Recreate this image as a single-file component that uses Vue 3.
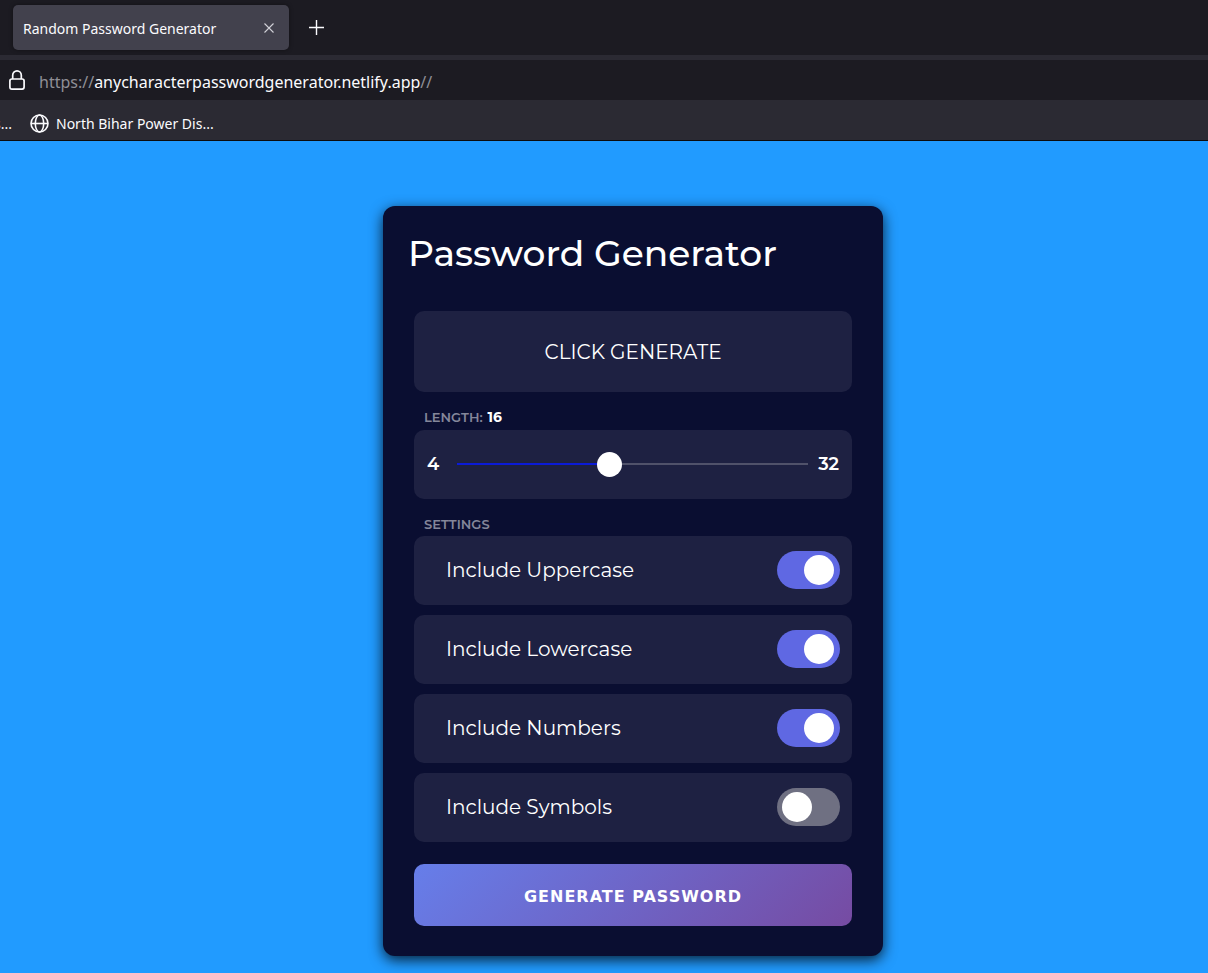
<script setup>
import { computed, reactive, ref } from 'vue'

const MIN = 4
const MAX = 32

const length = ref(16)
const password = ref('')
const settings = reactive([
  { id: 'uppercase', label: 'Include Uppercase', on: true, chars: 'ABCDEFGHIJKLMNOPQRSTUVWXYZ' },
  { id: 'lowercase', label: 'Include Lowercase', on: true, chars: 'abcdefghijklmnopqrstuvwxyz' },
  { id: 'numbers', label: 'Include Numbers', on: true, chars: '0123456789' },
  { id: 'symbols', label: 'Include Symbols', on: false, chars: '!@#$%^&*()_+-=' },
])

const fill = computed(() => ((length.value - MIN) / (MAX - MIN)) * 100 + '%')

function generate() {
  const pool = settings.filter((s) => s.on).map((s) => s.chars).join('')
  if (!pool) {
    password.value = ''
    return
  }
  let out = ''
  for (let i = 0; i < length.value; i++) {
    out += pool[Math.floor(Math.random() * pool.length)]
  }
  password.value = out
}
</script>

<template>
  <div class="window">
    <header class="chrome">
      <div class="tabs">
        <div class="tab">
          <span class="tab-title">Random Password Generator</span>
          <button class="icon-button" type="button" aria-label="Close tab">
            <svg width="10" height="10" viewBox="0 0 10 10" fill="none" stroke="#d2d1d8" stroke-width="1.1">
              <path d="M0.5 0.5 9.5 9.5M9.5 0.5 0.5 9.5" />
            </svg>
          </button>
        </div>
        <button class="icon-button" type="button" aria-label="New tab">
          <svg width="15" height="15" viewBox="0 0 15 15" fill="none" stroke="#fbfbfe" stroke-width="1.4">
            <path d="M7.5 0V15M0 7.5H15" />
          </svg>
        </button>
      </div>
      <div class="address">
        <svg width="16" height="20" viewBox="0 0 16 20" fill="none" stroke="#fbfbfe" stroke-width="1.7">
          <rect x="0.9" y="9" width="14.2" height="10.1" rx="2" />
          <path d="M3.7 9V5.2a4.3 4.3 0 0 1 8.6 0V9" />
        </svg>
        <span class="url">https://<b>anycharacterpasswordgenerator.netlify.app</b>//</span>
      </div>
      <nav class="bookmarks">
        <a class="clipped" href="#">s...</a>
        <a class="bookmark" href="#">
          <svg width="19" height="19" viewBox="0 0 19 19" fill="none" stroke="#fbfbfe" stroke-width="1.6">
            <circle cx="9.5" cy="9.5" r="8.5" />
            <ellipse cx="9.5" cy="9.5" rx="4.2" ry="8.5" />
            <path d="M1 9.5H18" />
          </svg>
          <span>North Bihar Power Dis...</span>
        </a>
      </nav>
    </header>

    <main class="page">
      <section class="card">
        <h1>Password Generator</h1>

        <div class="panel result">{{ password || 'CLICK GENERATE' }}</div>

        <label class="caption" for="length">LENGTH:<b>{{ length }}</b></label>
        <div class="panel slider">
          <span>{{ MIN }}</span>
          <input
            id="length"
            v-model.number="length"
            type="range"
            :min="MIN"
            :max="MAX"
            :style="{ '--fill': fill }"
          />
          <span>{{ MAX }}</span>
        </div>

        <h2 class="caption">SETTINGS</h2>
        <div class="settings">
          <label v-for="s in settings" :key="s.id" class="panel setting" :for="s.id">
            <span>{{ s.label }}</span>
            <input :id="s.id" v-model="s.on" class="switch" type="checkbox" />
          </label>
        </div>

        <button class="generate" type="button" @click="generate">GENERATE PASSWORD</button>
      </section>
    </main>
  </div>
</template>

<style>
body {
  margin: 0;
}
</style>

<style scoped>
* {
  box-sizing: border-box;
}

.window {
  display: flex;
  flex-direction: column;
  min-height: 100vh;
  overflow: hidden;
  background: #219bff;
}

.chrome {
  background: #2b2a33;
  border-bottom: 1px solid #0c0c0d;
  color: #fbfbfe;
  font-family: "Segoe UI", "Noto Sans", sans-serif;
  font-size: 14px;
  line-height: 20px;
}

.tabs {
  display: flex;
  align-items: center;
  gap: 20px;
  height: 55px;
  padding: 0 13px;
  background: #1c1b22;
}

.tab {
  display: flex;
  align-items: center;
  justify-content: space-between;
  width: 276px;
  height: 45px;
  padding: 0 15px 0 10px;
  border-radius: 5px;
  background: #42414d;
  box-shadow: 0 0 4px rgba(0, 0, 0, 0.4);
}

.tab-title {
  padding-top: 2px;
}

.icon-button {
  display: flex;
  padding: 0;
  border: 0;
  background: none;
}

.address {
  display: flex;
  align-items: center;
  gap: 14px;
  height: 40px;
  margin-top: 5px;
  padding: 0 9px;
  background: #1c1b22;
}

.url {
  padding-top: 3px;
  color: #8f8f96;
  font-size: 16px;
  line-height: 24px;
}

.url b {
  color: #fbfbfe;
  font-weight: 400;
}

.bookmarks {
  display: flex;
  align-items: center;
  height: 40px;
  padding-top: 7px;
}

.bookmarks a {
  color: #fbfbfe;
  text-decoration: none;
}

.clipped {
  display: flex;
  justify-content: flex-end;
  width: 12px;
  overflow: hidden;
}

.bookmark {
  display: flex;
  align-items: center;
  gap: 7px;
  margin-left: 18px;
}

.page {
  display: flex;
  flex: 1;
  align-items: flex-start;
  justify-content: center;
  padding: 65px 0 17px 58px;
}

.card {
  width: 500px;
  padding: 25px 31px 30px;
  border-radius: 12px;
  background: #0a0e31;
  box-shadow: 0 4px 14px rgba(0, 0, 0, 0.8);
  color: #fff;
  font-family: Montserrat, Inter, sans-serif;
}

h1 {
  margin: 0 0 35px -6px;
  font-size: 36px;
  font-weight: 500;
  line-height: 45px;
}

.panel {
  border-radius: 10px;
  background: #1e2142;
}

.result {
  display: flex;
  align-items: center;
  justify-content: center;
  min-height: 81px;
  font-size: 20px;
}

.caption {
  display: block;
  margin: 0;
  padding: 16px 10px 4px;
  color: #84869a;
  font-size: 13px;
  font-weight: 600;
  line-height: 18px;
}

h2.caption {
  padding-bottom: 3px;
}

.caption b {
  margin-left: 5px;
  color: #fff;
  font-size: 14px;
  font-weight: 700;
}

.slider {
  display: flex;
  align-items: center;
  gap: 10px;
  min-height: 69px;
  padding: 0 13px 1px;
  font-size: 18px;
  font-weight: 600;
}

.slider span:first-child {
  min-width: 20px;
}

.slider input {
  flex: 1;
  min-width: 0;
  height: 25px;
  margin: 0;
  appearance: none;
  background: linear-gradient(#0b1bd8, #0b1bd8) left center / var(--fill) 2px no-repeat,
    linear-gradient(#50526a, #50526a) center / 100% 2px no-repeat;
}

.slider input::-webkit-slider-thumb {
  width: 25px;
  height: 25px;
  appearance: none;
  border-radius: 50%;
  background: #fff;
}

.settings {
  display: flex;
  flex-direction: column;
  gap: 10px;
}

.setting {
  display: flex;
  align-items: center;
  justify-content: space-between;
  min-height: 69px;
  padding: 0 12px 1px 32px;
  font-size: 20px;
}

.switch {
  width: 63px;
  height: 38px;
  margin: 0;
  padding: 4px 5px;
  appearance: none;
  border-radius: 19px;
  background: #6f7082;
}

.switch::before {
  display: block;
  width: 30px;
  height: 30px;
  border-radius: 50%;
  background: #fff;
  content: "";
}

.switch:checked {
  padding-left: 27px;
  background: #5f68e3;
}

.generate {
  width: 100%;
  height: 62px;
  margin-top: 22px;
  padding: 2px 0 0;
  border: 0;
  border-radius: 10px;
  background: linear-gradient(135deg, #667eea, #764ba2);
  color: #fff;
  font-family: Verdana, "DejaVu Sans", sans-serif;
  font-size: 16px;
  font-weight: 700;
  letter-spacing: 1px;
}
</style>
